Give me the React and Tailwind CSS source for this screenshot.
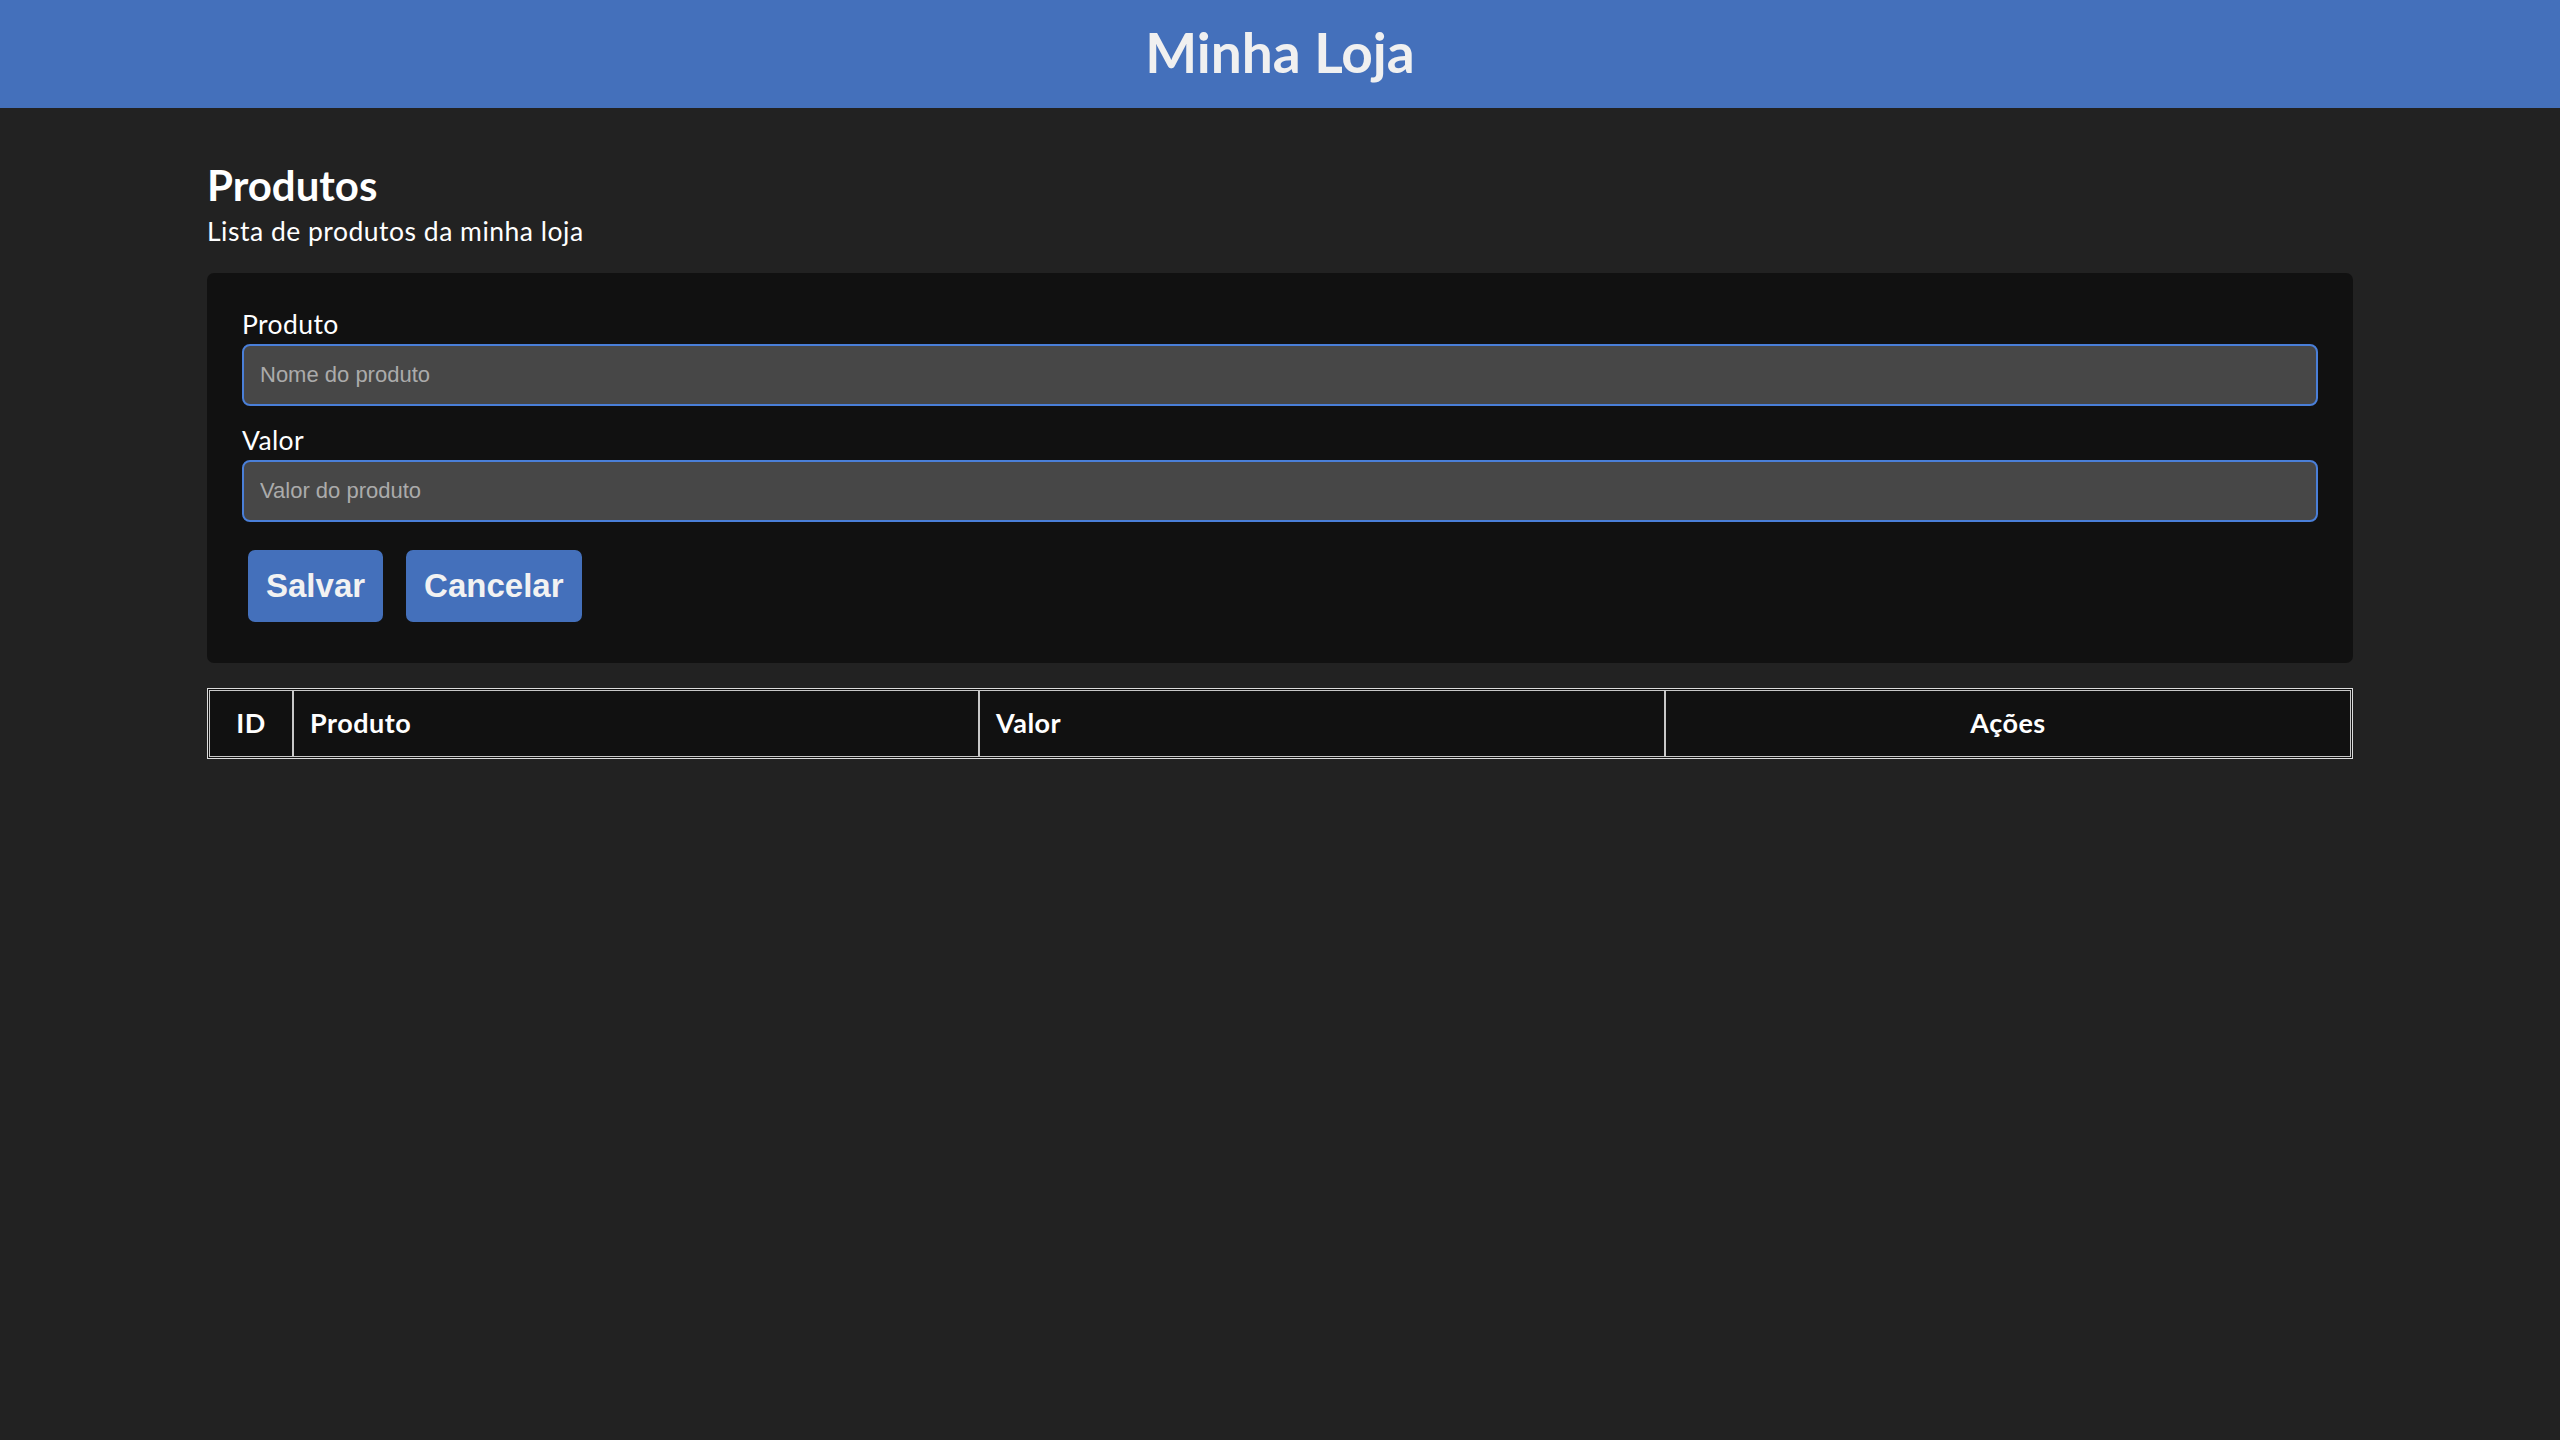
export default function App() {
  const font = { fontFamily: 'Lato, "Open Sans", sans-serif' };
  return (
    <div className="min-h-[1440px] bg-[#222222] text-[#f2f2f2]" style={font}>
      <header className="h-[108px] bg-[#4470bb] flex items-center justify-center">
        <h1 className="text-[55px] font-bold leading-none text-[#f0f0f0] -mt-[4px]">Minha Loja</h1>
      </header>
      <main className="mx-[207px]">
        <h2 className="mt-[52px] text-[42px] font-bold leading-[1.2] text-white">Produtos</h2>
        <p className="mt-[6px] text-[26.5px] leading-[1.2] tracking-[0.5px] text-white">Lista de produtos da minha loja</p>
        <div className="mt-[25px] bg-[#111111] rounded-[7px] pt-[36px] pb-[41px] px-[35px]">
          <label className="block text-[26.5px] leading-[1.2] tracking-[0.4px] text-white">Produto</label>
          <input
            className="mt-[3px] block w-full h-[62px] rounded-[8px] border-2 border-[#4a7fd8] bg-[#474747] pl-[16px] text-[22px] text-[#eeeeee] placeholder:text-[#ababab] outline-none"
            style={{ fontFamily: '"Liberation Sans", Arial, sans-serif' }}
            placeholder="Nome do produto"
          />
          <label className="mt-[19px] block text-[26.5px] leading-[1.2] tracking-[0.4px] text-white">Valor</label>
          <input
            className="mt-[3px] block w-full h-[62px] rounded-[8px] border-2 border-[#4a7fd8] bg-[#474747] pl-[16px] text-[22px] text-[#eeeeee] placeholder:text-[#ababab] outline-none"
            style={{ fontFamily: '"Liberation Sans", Arial, sans-serif' }}
            placeholder="Valor do produto"
          />
          <div className="mt-[28px] ml-[6px] flex gap-[23px]" style={{ fontFamily: '"Liberation Sans", Arial, sans-serif' }}>
            <button className="h-[72px] px-[18px] rounded-[7px] bg-[#4470bb] text-[33px] font-bold text-[#f2f2f2]">Salvar</button>
            <button className="h-[72px] px-[18px] rounded-[7px] bg-[#4470bb] text-[33px] font-bold text-[#f2f2f2]">Cancelar</button>
          </div>
        </div>
        <div className="mt-[25px] border border-[#dcdcdc] p-[1px] bg-[#111111]">
          <div className="grid grid-cols-[84px_1fr_1fr_1fr] text-[27px] tracking-[0.5px] font-bold text-white">
            <div className="h-[67px] border border-[#c8c8c8] flex items-center justify-center">ID</div>
            <div className="h-[67px] border border-[#c8c8c8] flex items-center pl-[16px]">Produto</div>
            <div className="h-[67px] border border-[#c8c8c8] flex items-center pl-[16px]">Valor</div>
            <div className="h-[67px] border border-[#c8c8c8] flex items-center justify-center">Ações</div>
          </div>
        </div>
      </main>
    </div>
  );
}
